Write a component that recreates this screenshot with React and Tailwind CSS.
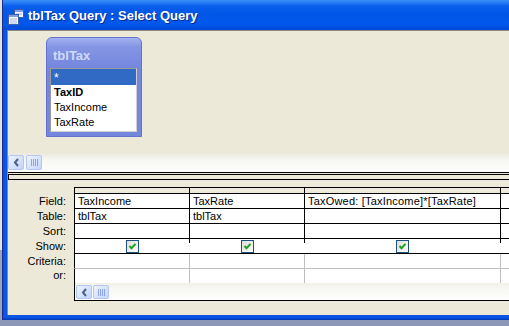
import React from "react";

const ArrowBtn = ({ h = "h-[15px]" }) => (
  <div className={`w-[16px] ${h} rounded-[2px] border border-[#b4c6f2] bg-[linear-gradient(135deg,#eef3fe,#c1d3fb)] flex items-center justify-center`}>
    <svg width="7" height="9" viewBox="0 0 7 9">
      <path d="M5 1 L2 4.5 L5 8" stroke="#4d6185" strokeWidth="2" fill="none" />
    </svg>
  </div>
);

const Thumb = ({ h = "h-[15px]" }) => (
  <div className={`w-[16px] ${h} rounded-[2px] border border-[#b4c6f2] bg-[linear-gradient(135deg,#eef3fe,#c5d6fb)] flex items-center justify-center gap-[1px]`}>
    <div className="w-[1px] h-[7px] bg-[#8da5e6]" />
    <div className="w-[1px] h-[7px] bg-[#8da5e6]" />
    <div className="w-[1px] h-[7px] bg-[#8da5e6]" />
    <div className="w-[1px] h-[7px] bg-[#8da5e6]" />
  </div>
);

const Check = () => (
  <div className="w-[13px] h-[13px] border border-[#1c5180] bg-[linear-gradient(135deg,#dcdcd7,#ffffff)] flex items-center justify-center">
    <svg width="9" height="9" viewBox="0 0 9 9">
      <path d="M1.5 4 L3.5 6.2 L7.5 1.8" stroke="#21a121" strokeWidth="2" fill="none" />
    </svg>
  </div>
);

const TitleIcon = () => (
  <svg width="16" height="16" viewBox="0 0 16 16" className="mt-[1px]">
    <rect x="6.5" y="0.5" width="9" height="8" fill="#f4f7ff" stroke="#3b5fae" />
    <rect x="7" y="1" width="8" height="2" fill="#7ea0e6" />
    <line x1="8" y1="5" x2="14" y2="5" stroke="#9fb2da" />
    <rect x="0.5" y="5.5" width="10" height="10" fill="#ffffff" stroke="#3b5fae" />
    <rect x="1" y="6" width="9" height="2" fill="#7ea0e6" />
    <line x1="2" y1="10" x2="9" y2="10" stroke="#9fb2da" />
    <line x1="2" y1="12" x2="9" y2="12" stroke="#9fb2da" />
    <line x1="2" y1="14" x2="9" y2="14" stroke="#9fb2da" />
  </svg>
);

const Label = ({ children, h = "h-[15px]" }) => (
  <div className={`w-[66px] ${h} flex items-center justify-end pr-[8px] pb-[1px]`}>{children}</div>
);

const TextRow = ({ label, cells }) => (
  <div className="flex">
    <Label>{label}</Label>
    <div className="flex-1 flex h-[15px] border-l border-black bg-white">
      <div className="w-[115px] border-r border-b border-black flex items-center px-[3px] whitespace-nowrap">{cells[0]}</div>
      <div className="w-[115px] border-r border-b border-black flex items-center px-[3px] whitespace-nowrap">{cells[1]}</div>
      <div className="w-[196px] border-r border-b border-black flex items-center px-[3px] whitespace-nowrap tracking-[0.2px]">{cells[2]}</div>
      <div className="flex-1 border-b border-black" />
    </div>
  </div>
);

const ShowCell = ({ w }) => (
  <div className={`${w} flex border-b border-black`}>
    <div className="flex-1 flex items-center justify-center">
      <Check />
    </div>
    <div className="w-[1px] flex flex-col">
      <div className="h-[4px] bg-black" />
    </div>
  </div>
);

const GrayRow = ({ label, last }) => (
  <div className="flex">
    <Label h={last ? "h-[14px]" : "h-[15px]"}>{label}</Label>
    <div className={`flex-1 flex ${last ? "h-[14px]" : "h-[15px] border-b border-[#c0c0c0]"} border-l border-l-black bg-white`}>
      <div className="w-[115px] border-r border-[#c0c0c0]" />
      <div className="w-[115px] border-r border-[#c0c0c0]" />
      <div className="w-[196px] border-r border-[#c0c0c0]" />
      <div className="flex-1" />
    </div>
  </div>
);

export default function App() {
  return (
    <div className="w-[509px] h-[326px] overflow-hidden flex flex-col bg-[#8c96b6] font-['Liberation_Sans',Arial,sans-serif] text-[11px] leading-none text-black">
      <div className="flex h-[320px]">
        <div className="w-[3px] flex flex-col">
          <div className="h-[250px] bg-[#e2e2e2] border-r border-[#1d2f8a]" />
          <div className="flex-1 bg-[#98a3c2] border-r border-[#1d2f8a]" />
        </div>
        <div className="flex-1 flex flex-col">
          {/* Title bar */}
          <div className="h-[30px] flex items-start pt-[8px] pl-[5px] gap-[4px] bg-[linear-gradient(to_bottom,#3d8ff8_0%,#2a7df5_8%,#0a5fec_20%,#0056e6_45%,#0058ec_80%,#0049d8_100%)]">
            <TitleIcon />
            <div className="text-white font-bold text-[13px] leading-[15px] whitespace-nowrap [text-shadow:1px_1px_0_#0a2a8c]">
              tblTax Query : Select Query
            </div>
          </div>
          <div className="flex flex-1">
            <div className="w-[4px] bg-[linear-gradient(to_right,#0a46d6,#0a5ae8,#0652e0)]" />
            {/* Client */}
            <div className="flex-1 flex flex-col border-t border-l border-[#8e8b80] bg-[#ece9d8]">
              {/* Top pane */}
              <div className="h-[122px] pt-[6px] pl-[38px]">
                <div className="w-[96px] h-[100px] rounded-t-[6px] border border-[#6274d0] bg-[#7587dd] flex flex-col">
                  <div className="h-[30px] rounded-t-[5px] bg-[linear-gradient(to_bottom,#a4b2f1,#8495e4_30%,#7587dd)] pl-[6px] pt-[10px]">
                    <div className="text-[13px] font-bold leading-[15px] text-[#cfd9f8]">tblTax</div>
                  </div>
                  <div className="ml-[3px] mr-[4px] h-[64px] border border-[#9a9a9a] border-r-[#d0d0d0] border-b-[#d0d0d0] bg-white flex flex-col">
                    <div className="h-[16px] bg-[#316ac5] text-white pl-[3px] pt-[3px] text-[12px]">*</div>
                    <div className="h-[15px] pl-[3px] flex items-center font-bold">TaxID</div>
                    <div className="h-[15px] pl-[3px] flex items-center">TaxIncome</div>
                    <div className="h-[15px] pl-[3px] flex items-center">TaxRate</div>
                  </div>
                </div>
              </div>
              {/* Top scrollbar */}
              <div className="h-[19px] flex items-start pt-[2px] gap-[2px] bg-[linear-gradient(to_bottom,#ebe9de,#f6f6f2_35%,#fefefe)]">
                <ArrowBtn />
                <Thumb />
              </div>
              {/* Splitter */}
              <div className="h-[1px] bg-black" />
              <div className="h-[1px] bg-[#ece9d8]" />
              <div className="h-[6px] border-t border-b border-l border-black bg-[#ece9d8]" />
              {/* Lower pane */}
              <div className="h-[135px] pt-[7px] flex flex-col">
                {/* header */}
                <div className="flex">
                  <div className="w-[66px] h-[7px]" />
                  <div className="flex-1 flex h-[7px] border-l border-t border-black bg-[#ece9d8]">
                    <div className="w-[115px] border-r border-b border-black" />
                    <div className="w-[115px] border-r border-b border-black" />
                    <div className="w-[196px] border-r border-b border-black" />
                    <div className="flex-1 border-b border-black" />
                  </div>
                </div>
                <TextRow label="Field:" cells={["TaxIncome", "TaxRate", "TaxOwed: [TaxIncome]*[TaxRate]"]} />
                <TextRow label="Table:" cells={["tblTax", "tblTax", ""]} />
                <TextRow label="Sort:" cells={["", "", ""]} />
                <div className="flex">
                  <Label>Show:</Label>
                  <div className="flex-1 flex h-[15px] border-l border-black bg-white">
                    <ShowCell w="w-[115px]" />
                    <ShowCell w="w-[115px]" />
                    <ShowCell w="w-[196px]" />
                    <div className="flex-1 border-b border-black" />
                  </div>
                </div>
                <GrayRow label="Criteria:" />
                <GrayRow label="or:" last />
                {/* grid scrollbar */}
                <div className="flex">
                  <div className="w-[66px]" />
                  <div className="flex-1 h-[18px] border-l border-b border-black flex items-start pt-[2px] pl-[1px] gap-[1px] bg-[linear-gradient(to_bottom,#f1f0ea,#f8f8f5_40%,#fefefe)]">
                    <ArrowBtn h="h-[14px]" />
                    <Thumb h="h-[14px]" />
                  </div>
                </div>
              </div>
            </div>
          </div>
          <div className="h-[5px] bg-[linear-gradient(to_bottom,#0a52e4,#0a5ae8_40%,#0036b8)]" />
        </div>
      </div>
      <div className="h-[6px] bg-[#8c96b6]" />
    </div>
  );
}
